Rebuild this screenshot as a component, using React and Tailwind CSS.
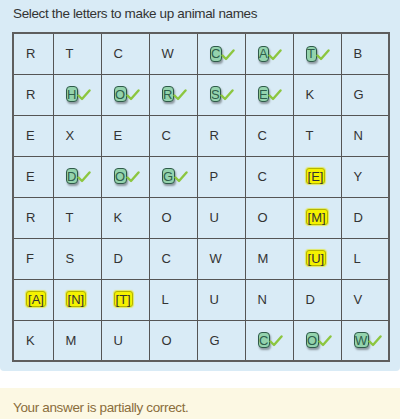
const ROWS = [
  ['R', 'T', 'C', 'W', 'C*', 'A*', 'T*', 'B'],
  ['R', 'H*', 'O*', 'R*', 'S*', 'E*', 'K', 'G'],
  ['E', 'X', 'E', 'C', 'R', 'C', 'T', 'N'],
  ['E', 'D*', 'O*', 'G*', 'P', 'C', 'E!', 'Y'],
  ['R', 'T', 'K', 'O', 'U', 'O', 'M!', 'D'],
  ['F', 'S', 'D', 'C', 'W', 'M', 'U!', 'L'],
  ['A!', 'N!', 'T!', 'L', 'U', 'N', 'D', 'V'],
  ['K', 'M', 'U', 'O', 'G', 'C*', 'O*', 'W*'],
]

function Check() {
  return (
    <svg width="14" height="12" viewBox="0 0 14 12" className="-ml-[1px] mt-[2px]">
      <path
        d="M1.5 6.5 L5 10 L12.5 1.5"
        fill="none"
        stroke="#8cc63f"
        strokeWidth="2.4"
        strokeLinecap="round"
        strokeLinejoin="round"
      />
    </svg>
  )
}

function Cell({ v }) {
  const letter = v[0]
  if (v.endsWith('*')) {
    return (
      <span className="inline-flex items-center">
        <span className="flex h-[16px] min-w-[11px] items-center justify-center rounded-[4px] border border-[#2f5a4a] bg-[#94d3ad] px-[0.5px] leading-none text-[#2f5f4c] shadow-[1px_2px_2px_rgba(0,0,0,0.35)]">
          {letter}
        </span>
        <Check />
      </span>
    )
  }
  if (v.endsWith('!')) {
    return (
      <span className="inline-flex h-[16px] items-center rounded-[3px] border border-[#b5b500] bg-[#f5f200] px-[1px] leading-none text-[#333] shadow-[0_0_1px_1px_rgba(230,230,0,0.6)]">
        [{letter}]
      </span>
    )
  }
  return <span>{letter}</span>
}

export default function App() {
  return (
    <div className="font-['Liberation_Sans',Arial,sans-serif] text-[13px] text-[#333]">
      <div className="rounded-b-[4px] bg-[#d9ebf6] pb-[9px]">
        <p className="px-[13px] pt-[6px] pb-[10px] text-[13.5px] leading-[16px] tracking-[-0.35px]">
          Select the letters to make up animal names
        </p>
        <table className="ml-[12px] border-collapse border-2 border-[#5e5e5e]">
          <colgroup>
            <col className="w-[40px]" />
            {[0, 1, 2, 3, 4, 5, 6].map((i) => (
              <col key={i} className="w-[48px]" />
            ))}
          </colgroup>
          <tbody>
            {ROWS.map((row, r) => (
              <tr key={r} className="h-[41px]">
                {row.map((v, c) => (
                  <td
                    key={c}
                    className="border border-[#555] pl-[12px] align-middle"
                  >
                    <Cell v={v} />
                  </td>
                ))}
              </tr>
            ))}
          </tbody>
        </table>
      </div>
      <div className="h-[17px] bg-white" />
      <div className="bg-[#fcf8e3] px-[13px] pt-[10px] pb-[11px] text-[13.5px] tracking-[-0.35px] text-[#8a6d3b]">
        Your answer is partially correct.
      </div>
    </div>
  )
}
